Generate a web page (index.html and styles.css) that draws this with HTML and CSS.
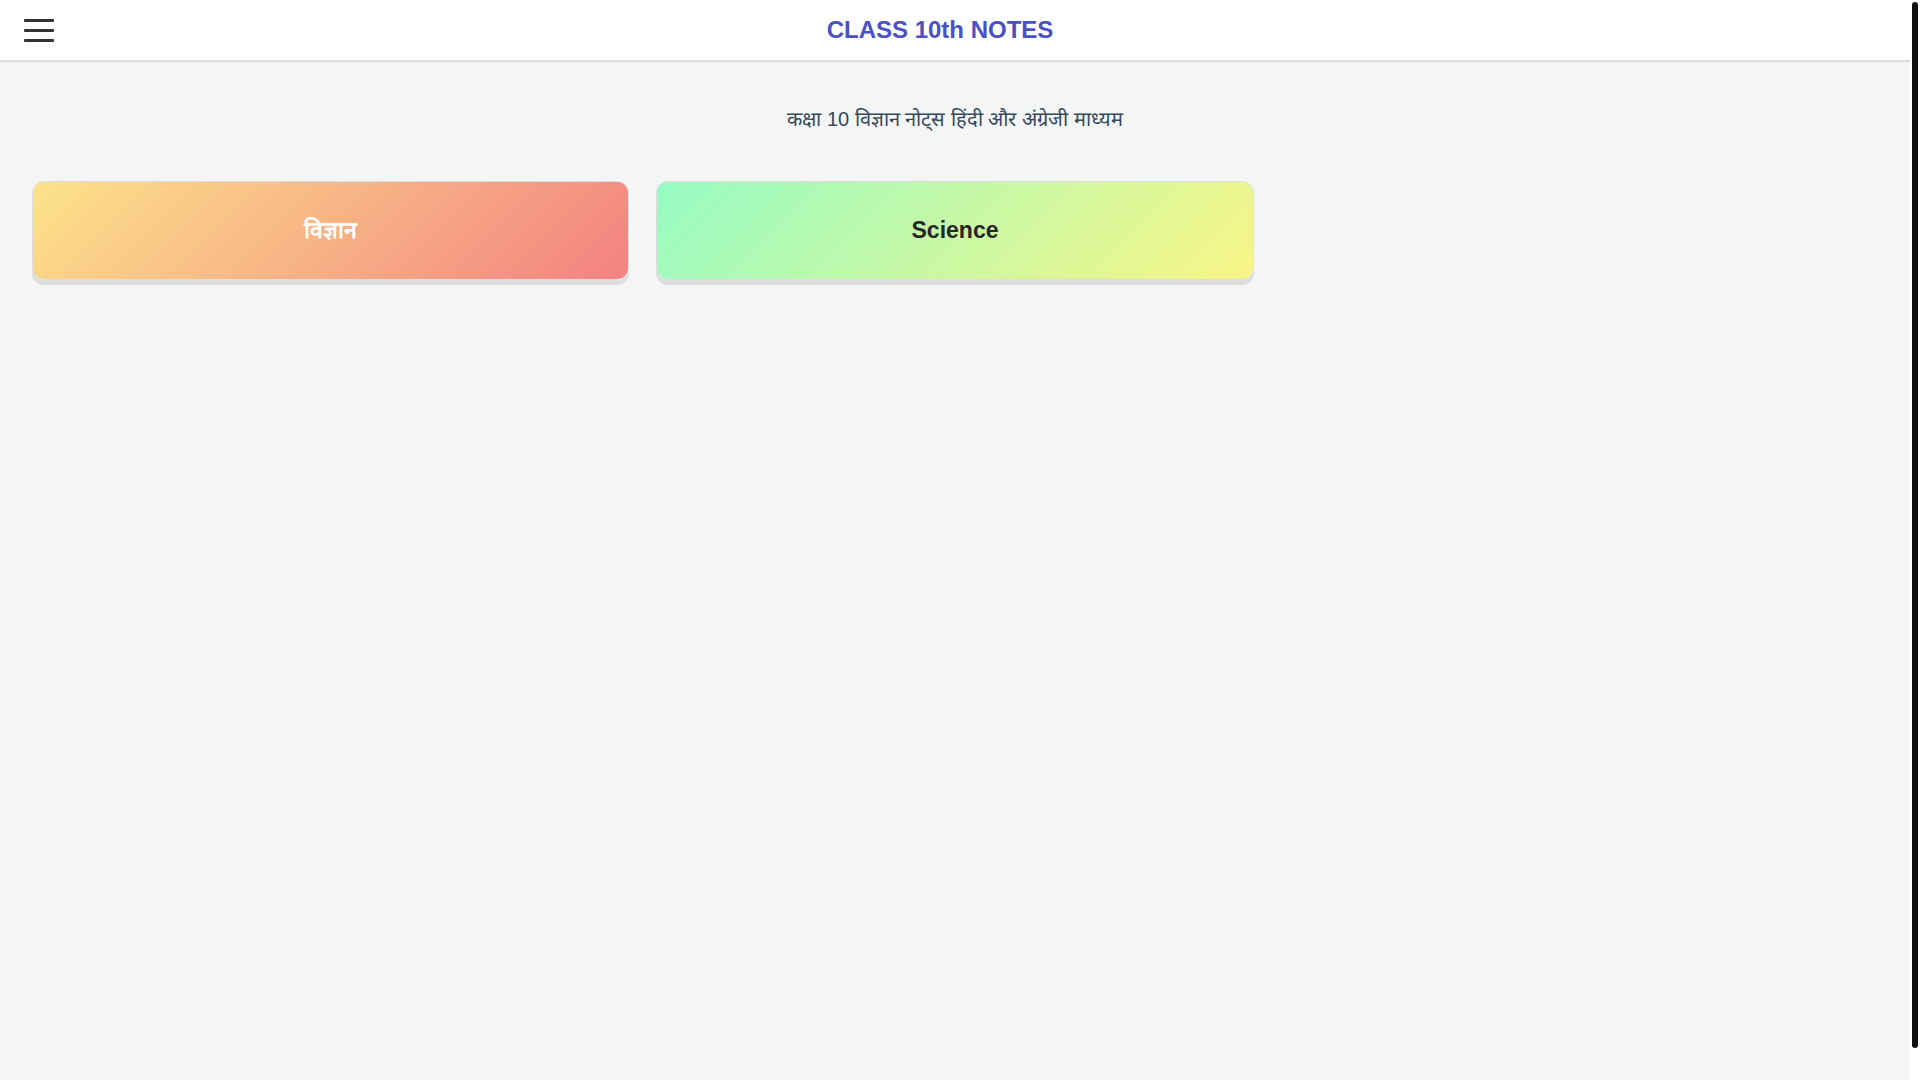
FILE: index.html
```html
<!DOCTYPE html>
<html lang="hi">
<head>
  <meta charset="UTF-8">
  <title>Class 10th Notes</title>
  <link rel="stylesheet" href="styles.css">
</head>
<body>
  <header class="topbar">
    <button class="menu-btn" aria-label="Menu">
      <span></span>
      <span></span>
      <span></span>
    </button>
    <h1 class="site-title">CLASS 10th NOTES</h1>
    <div></div>
  </header>

  <main class="page">
    <p class="subtitle">कक्षा 10 विज्ञान नोट्स हिंदी और अंग्रेजी माध्यम</p>

    <div class="subject-grid">
      <a class="subject-card hindi" href="#">विज्ञान</a>
      <a class="subject-card english" href="#">Science</a>
    </div>
  </main>

  <div class="scroll-thumb"></div>
</body>
</html>
```

FILE: styles.css
```css
html {
  background-color: #ffffff;
  overflow: hidden;
}
body {
  margin: 0 10px 0 0;
  min-height: 100vh;
  background-color: #f4f5f5;
  font-family: 'Liberation Sans', Arial, sans-serif;
}
.scroll-thumb {
  position: fixed;
  top: 2px;
  right: 2px;
  width: 6px;
  height: 1046px;
  background-color: #111111;
  border-radius: 3px;
}
.topbar {
  display: grid;
  grid-template-columns: 1fr auto 1fr;
  align-items: center;
  height: 60px;
  padding-right: 30px;
  background-color: #ffffff;
  border-bottom: 2px solid #dcdddc;
}
.menu-btn {
  display: flex;
  flex-direction: column;
  gap: 7px;
  width: 30px;
  margin-left: 24px;
  padding: 0;
  background: none;
  border: none;
  cursor: pointer;
}
.menu-btn span {
  display: block;
  height: 3px;
  background-color: #333333;
  border-radius: 1px;
}
.site-title {
  margin: 0;
  font-size: 24px;
  font-weight: bold;
  color: #4a50c6;
}
.page {
  padding: 43px 32px 0;
}
.subtitle {
  margin: 0;
  text-align: center;
  font-size: 20px;
  line-height: 28px;
  color: #34495e;
}
.subject-grid {
  display: grid;
  grid-template-columns: repeat(3, 1fr);
  gap: 27px;
  margin-top: 48px;
}
.subject-card {
  display: block;
  padding: 35px 20px;
  border: 1px solid #dddddd;
  border-radius: 12px;
  box-shadow: 0 5px 0 #dcdddc;
  text-align: center;
  text-decoration: none;
  font-size: 23px;
  line-height: 27px;
  font-weight: bold;
}
.hindi {
  background: linear-gradient(135deg, #fce38a, #f38181);
  color: #ffffff;
}
.english {
  background: linear-gradient(135deg, #96fbc4, #f9f586);
  color: #262626;
}
```
